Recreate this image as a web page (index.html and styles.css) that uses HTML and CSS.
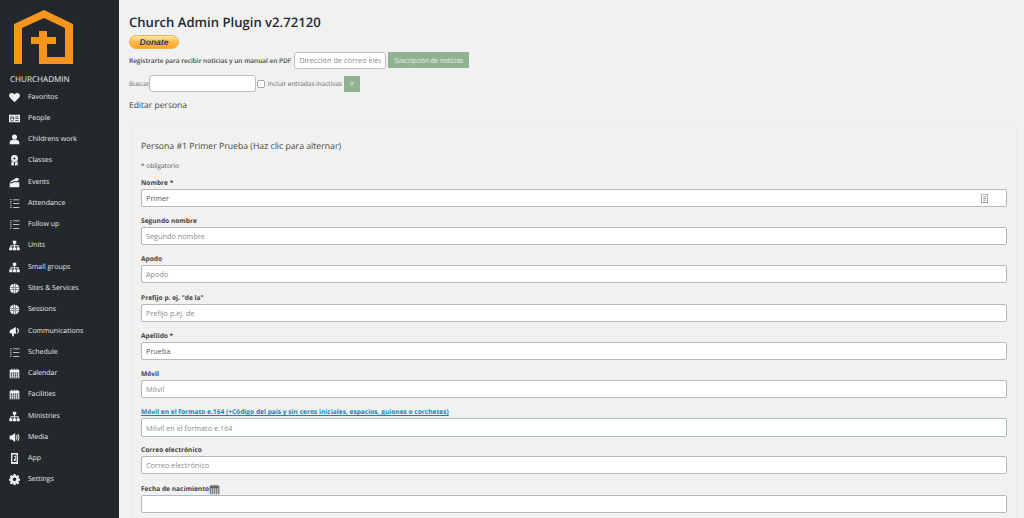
FILE: index.html
```html
<!DOCTYPE html>
<html lang="es">
<head>
<meta charset="utf-8">
<title>Church Admin Plugin</title>
<link rel="stylesheet" href="styles.css">
</head>
<body>
<svg class="defs" width="0" height="0" aria-hidden="true">
  <symbol id="i-heart" viewBox="0 0 16 16"><path d="M8 15 1.500 8.400C-.6 6-.1 2.600 2.600 1.800 4.800 1.200 6.800 2 8 3.800 9.200 2 11.200 1.200 13.400 1.800 16.100 2.600 16.600 6 14.500 8.400Z"/></symbol>
  <symbol id="i-card" viewBox="0 0 16 16"><path fill-rule="evenodd" d="M0 2.500h16v11H0ZM2 5v5h5V5Zm7 0v1.200h5V5Zm0 2.500v1.200h5V7.500Zm0 2.500v1.200h5V10ZM2 11v1h5v-1Z"/><circle cx="4.500" cy="6.600" r="1.200"/><path d="M2.500 10c0-1.500 1-2 2-2s2 .5 2 2Z"/></symbol>
  <symbol id="i-user" viewBox="0 0 16 16"><circle cx="8" cy="4.500" r="3.700"/><path d="M1 15v-2.500C1 10 3.500 8.800 5.500 8.500 6.500 9.300 9.500 9.300 10.500 8.500 12.500 8.800 15 10 15 12.500V15Z"/></symbol>
  <symbol id="i-award" viewBox="0 0 16 16"><path fill-rule="evenodd" d="M8 0a5 5 0 1 1 0 10A5 5 0 0 1 8 0Zm0 3.500a1.500 1.500 0 1 0 0 3 1.500 1.500 0 0 0 0-3Z"/><path d="M3.500 9 7.300 11V16L5.400 14.600 3.300 15.800ZM12.500 9 8.700 11V16l1.900-1.400 2.100 1.200Z"/></symbol>
  <symbol id="i-events" viewBox="0 0 16 16"><path d="M2 6.500 11 1l4 2-2.500 3H7L2 8.200ZM1 9h3.500L7 7.500h8V15H1Z"/></symbol>
  <symbol id="i-list" viewBox="0 0 16 16"><path d="M2 1.500h1.500V3H2ZM2 4.500h1.500V6H2ZM2 7.500h1.500V9H2ZM2 10.500h1.500V12H2ZM2 13h1.500v1.500H2ZM6 2h9v1.300H6ZM6 7.500h9v1.300H6ZM6 13h9v1.300H6Z"/></symbol>
  <symbol id="i-tree" viewBox="0 0 16 16"><path d="M5.500 1h5v4.500H8.700v2h5.300V11h1.600v4h-4.600v-4h1.600V9H8.700v2h1.500v4H5.800v-4h1.500V9H3.400v2H5v4H.4v-4H2V7.500h5.300v-2H5.500Z"/></symbol>
  <symbol id="i-globe" viewBox="0 0 16 16"><path fill-rule="evenodd" d="M8 1a7 7 0 1 1 0 14A7 7 0 0 1 8 1ZM1.500 6.200v.7h13v-.7Zm0 3v.7h13v-.7ZM6 1.500v13h.7v-13Zm3.300 0v13h.7v-13Z"/></symbol>
  <symbol id="i-mega" viewBox="0 0 16 16"><path d="M1 6.500 10 1.500V11.500L6.500 11 7.500 15H5L3.800 10.700 1 10.500ZM11 4.500a3 3 0 0 1 0 5.500l1.200 1.300A5 5 0 0 0 12.500 3Z"/></symbol>
  <symbol id="i-cal" viewBox="0 0 16 16"><path fill-rule="evenodd" d="M1 2.500h2.500V1h1.500v1.500h2.300V1h1.500v1.500H11V1h1.500v1.500H15V15H1ZM2.500 6.500v1.700h2V6.500Zm3 0v1.700h2V6.500Zm3 0v1.700h2V6.500Zm3 0v1.700h2V6.500ZM2.500 9.500v1.700h2V9.500Zm3 0v1.700h2V9.500Zm3 0v1.700h2V9.500Zm3 0v1.700h2V9.500ZM2.500 12.300V14h2v-1.700Zm3 0V14h2v-1.700Zm3 0V14h2v-1.700Zm3 0V14h2v-1.700Z"/></symbol>
  <symbol id="i-media" viewBox="0 0 16 16"><path d="M1 5h3l5-3.500v13L4 11H1ZM11 4.500c1.800 1.800 1.800 5.200 0 7l-1-1c1-1.200 1-3.800 0-5ZM13 2.500c3 3 3 8 0 11l-1-1c2.200-2.500 2.200-6.500 0-9Z"/></symbol>
  <symbol id="i-app" viewBox="0 0 16 16"><path fill-rule="evenodd" d="M3 0h10v16H3Zm2 2v11h6V2Zm2.500 2.500 2.500-1v6.500a1.500 1.500 0 1 1-1-1.400V5.500l-1.500.5Z"/></symbol>
  <symbol id="i-gear" viewBox="0 0 16 16"><path fill-rule="evenodd" d="M6.500 0h3l.4 2.400 1.300.6 2-1.400 2.100 2.100-1.400 2 .6 1.300 2.400.4v3l-2.400.4-.6 1.300 1.400 2-2.100 2.100-2-1.400-1.300.6-.4 2.400h-3l-.4-2.400-1.300-.6-2 1.400L.7 14.100l1.400-2-.6-1.300L-.900 10.400v-3l2.400-.4.600-1.300-1.400-2L2.800 1.600l2 1.400 1.300-.6ZM8 5.500a2.800 2.800 0 1 0 0 5.600 2.800 2.800 0 0 0 0-5.600Z" transform="translate(.5 0) scale(.94)"/></symbol>
</svg>

<div class="layout">
  <aside class="sidebar">
    <div class="logo-wrap">
      <svg class="logo" viewBox="0 0 59 54"><polygon fill="#f7941d" points="30,0 59,14 59,54 25,54 25,34 17,34 17,27 25,27 25,21 33,21 33,27 42,27 42,34 33,34 33,47 51,47 51,18 30,8 8,18 8,54 0,54 0,14"/></svg>
    </div>
    <div class="brand">CHURCHADMIN</div>
    <nav class="menu">
      <a class="menu-item"><svg class="ico"><use href="#i-heart"/></svg><span>Favoritos</span></a>
      <a class="menu-item"><svg class="ico"><use href="#i-card"/></svg><span>People</span></a>
      <a class="menu-item"><svg class="ico"><use href="#i-user"/></svg><span>Childrens work</span></a>
      <a class="menu-item"><svg class="ico"><use href="#i-award"/></svg><span>Classes</span></a>
      <a class="menu-item"><svg class="ico"><use href="#i-events"/></svg><span>Events</span></a>
      <a class="menu-item"><svg class="ico"><use href="#i-list"/></svg><span>Attendance</span></a>
      <a class="menu-item"><svg class="ico"><use href="#i-list"/></svg><span>Follow up</span></a>
      <a class="menu-item"><svg class="ico"><use href="#i-tree"/></svg><span>Units</span></a>
      <a class="menu-item"><svg class="ico"><use href="#i-tree"/></svg><span>Small groups</span></a>
      <a class="menu-item"><svg class="ico"><use href="#i-globe"/></svg><span>Sites &amp; Services</span></a>
      <a class="menu-item"><svg class="ico"><use href="#i-globe"/></svg><span>Sessions</span></a>
      <a class="menu-item"><svg class="ico"><use href="#i-mega"/></svg><span>Communications</span></a>
      <a class="menu-item"><svg class="ico"><use href="#i-list"/></svg><span>Schedule</span></a>
      <a class="menu-item"><svg class="ico"><use href="#i-cal"/></svg><span>Calendar</span></a>
      <a class="menu-item"><svg class="ico"><use href="#i-cal"/></svg><span>Facilities</span></a>
      <a class="menu-item"><svg class="ico"><use href="#i-tree"/></svg><span>Ministries</span></a>
      <a class="menu-item"><svg class="ico"><use href="#i-media"/></svg><span>Media</span></a>
      <a class="menu-item"><svg class="ico"><use href="#i-app"/></svg><span>App</span></a>
      <a class="menu-item"><svg class="ico"><use href="#i-gear"/></svg><span>Settings</span></a>
    </nav>
  </aside>

  <main class="content">
    <h1 class="title">Church Admin Plugin v2.72120</h1>
    <div class="donate"><span class="donate-btn">Donate</span></div>
    <div class="row newsletter">
      <span class="strong-text">Registrarte para recibir noticias y un manual en PDF</span>
      <input class="text-input email" type="text" placeholder="Dirección de correo electrónico">
      <button class="btn wide" type="button">Suscripción de noticias</button>
    </div>
    <div class="row search">
      <span class="muted">Buscar</span>
      <input class="text-input query" type="text">
      <span class="check"></span>
      <span class="muted">Incluir entradas inactivas</span>
      <button class="btn go" type="button">Ir</button>
    </div>
    <h2 class="subtitle">Editar persona</h2>

    <section class="card">
      <h3 class="card-title">Persona #1 Primer Prueba (Haz clic para alternar)</h3>
      <p class="required">* obligatorio</p>

      <div class="field">
        <label class="label">Nombre *</label>
        <div class="input-wrap">
          <input class="field-input" type="text" value="Primer">
          <svg class="field-badge" viewBox="0 0 8 10"><path fill="#9a9a9a" fill-rule="evenodd" d="M0 0h8v10H0Zm1 1v8h6V1Z"/><path fill="#9a9a9a" d="M2.500 2.500h3v1h-3ZM2.500 4.500h3v1h-3ZM2.500 6.500h3v1h-3Z"/></svg>
        </div>
      </div>
      <div class="field"><label class="label">Segundo nombre</label><input class="field-input" type="text" placeholder="Segundo nombre"></div>
      <div class="field"><label class="label">Apodo</label><input class="field-input" type="text" placeholder="Apodo"></div>
      <div class="field"><label class="label">Prefijo p. ej. "de la"</label><input class="field-input" type="text" placeholder="Prefijo p.ej. de"></div>
      <div class="field"><label class="label">Apellido *</label><input class="field-input" type="text" value="Prueba"></div>
      <div class="field"><label class="label">Móvil</label><input class="field-input" type="text" placeholder="Móvil"></div>
      <div class="field"><label class="label link">Móvil en el formato e.164 (+Código del país y sin ceros iniciales, espacios, guiones o corchetes)</label><input class="field-input valid" type="text" placeholder="Móvil en el formato e.164"></div>
      <div class="field"><label class="label">Correo electrónico</label><input class="field-input" type="text" placeholder="Correo electrónico"></div>
      <div class="field"><label class="label">Fecha de nacimiento<svg class="label-ico"><use href="#i-cal"/></svg></label><input class="field-input" type="text"></div>
    </section>
  </main>
</div>
</body>
</html>
```

FILE: styles.css
```css
* { box-sizing: border-box; }
html, body { margin: 0; height: 518px; overflow: hidden; }
body { background: #f1f1f1; font-family: "Open Sans", "Liberation Sans", sans-serif; color: #444; font-size: 8.5px; text-rendering: geometricPrecision; }
.defs { position: absolute; }
.layout { display: flex; height: 518px; overflow: hidden; }

.sidebar { flex: 0 0 119px; background: #23282d; color: #eee; height: 518px; }
.logo-wrap { padding: 10px 0 0 14px; height: 74px; }
.logo { display: block; width: 59px; height: 54px; }
.brand { padding-left: 10px; font-size: 8.1px; font-weight: 500; line-height: 12px; height: 12px; color: #eef0f2; }
.menu { display: flex; flex-direction: column; padding-top: 0.5px; }
.menu-item { display: flex; align-items: center; height: 21.28px; padding-left: 9px; color: #e6e8ea; font-size: 7px; }
.ico { width: 11px; height: 11px; fill: #f1f1f1; flex: none; margin-right: 8px; }

.content { flex: 1; min-width: 0; padding: 14px 8px 0 10px; }
.title { margin: 0; font-size: 13.1px; font-weight: 600; line-height: 17px; color: #23282d; }
.donate { margin-top: 4px; height: 15px; }
.donate-btn { display: block; width: 50px; height: 14px; border-radius: 7px; background: linear-gradient(#ffe9a8, #ffb53c 55%, #fba72c); border: 1px solid #eeb04e; text-align: center; font-family: "Liberation Sans", sans-serif; font-size: 8.5px; line-height: 12px; font-weight: 700; font-style: italic; color: #1f3a6e; }
.row { display: flex; align-items: center; }
.newsletter { margin-top: 1px; height: 18px; }
.strong-text { font-size: 6.48px; font-weight: 600; color: #444; white-space: nowrap; }
.text-input { background: #fff; border: 1px solid #b9bec4; border-radius: 3px; font: inherit; padding: 0 4px; outline: none; }
.email { width: 92px; height: 17px; margin-left: 3px; font-size: 7.4px; }
.btn { border: 0; background: #90b290; color: #e8f0e8; font: inherit; font-size: 6.5px; padding: 0; height: 16px; white-space: nowrap; }
.wide { width: 81px; margin-left: 2px; }
.search { margin-top: 6px; height: 17px; }
.muted { color: #666; font-size: 6.45px; white-space: nowrap; }
.query { width: 107px; height: 17px; }
.check { width: 8px; height: 8px; background: #fff; border: 1px solid #a4a8ad; border-radius: 2px; margin: 0 2px 0 1px; }
.go { width: 16px; height: 16px; margin-left: 2px; }
.subtitle { margin: 7px 0 0; font-size: 8.5px; font-weight: 500; line-height: 13px; color: #444; }

.card { margin-top: 12px; width: 886px; margin-left: 2px; border: 1px solid #ebebeb; padding: 15px 9px 0 9px; height: 600px; }
.card-title { margin: 0; font-size: 8.7px; font-weight: 500; line-height: 13px; color: #444; }
.required { margin: 8px 0 0; font-size: 6.5px; line-height: 10px; color: #555; }
.field { display: flex; flex-direction: column; height: 38.2px; }
.required + .field { margin-top: 7px; }
.label { font-size: 6.6px; font-weight: 700; line-height: 10px; height: 11px; color: #444; white-space: nowrap; display: flex; align-items: flex-start; }
.label.link { color: #1f7fb5; text-decoration: underline; }
.label-ico { width: 11px; height: 11px; fill: #666; }
.input-wrap { position: relative; display: flex; }
.field-input { width: 100%; height: 18px; background: #fff; border: 1px solid #b4b9bf; border-radius: 2px; font: inherit; font-size: 7.3px; color: #555; padding: 0 4px; outline: none; }
.field-input::placeholder, .text-input::placeholder { color: #8a8a8a; opacity: 1; }
.field-input.valid { border-color: #a9c2a9; height: 19px; }
.field-badge { position: absolute; right: 19px; top: 5px; width: 7px; height: 9px; }
```
